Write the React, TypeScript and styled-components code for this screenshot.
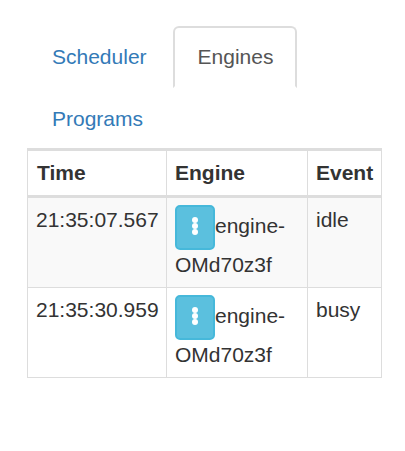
import React from "react";
import styled, { createGlobalStyle } from "styled-components";

const GlobalStyle = createGlobalStyle`
  *, *::before, *::after { box-sizing: border-box; }
  body {
    margin: 0;
    background: #fff;
    color: #333;
    font: 21px/30px "Liberation Sans", Arial, sans-serif;
  }
`;

const Page = styled.main`
  width: 355px;
  margin: 26px 0 0 27px;
`;

const Tabs = styled.nav`
  display: flex;
  flex-wrap: wrap;
  column-gap: 3px;
  margin-bottom: -1px;
`;

const Tab = styled.a<{ $active?: boolean }>`
  height: ${(p) => (p.$active ? 62 : 61)}px;
  padding: 14px ${(p) => (p.$active ? 22 : 21)}px 0 23px;
  border: 2px solid ${(p) => (p.$active ? "#ddd" : "transparent")};
  border-bottom-color: transparent;
  border-radius: 6px 6px 0 0;
  color: ${(p) => (p.$active ? "#555" : "#337ab7")};
  text-decoration: none;
`;

const LogTable = styled.table`
  width: 355px;
  table-layout: fixed;
  border-collapse: separate;
  border-spacing: 0;
  border-left: 1px solid #ddd;
  border-top: 3px solid #ddd;
`;

const Column = styled.col<{ $width: number }>`
  width: ${(p) => p.$width}px;
`;

const HeadCell = styled.th`
  height: 47px;
  padding: 7px 0 7px 8px;
  border-right: 1px solid #ddd;
  border-bottom: 3px solid #ddd;
  text-align: left;
  vertical-align: top;

  &:first-child { padding-left: 9px; }
`;

const Row = styled.tr`
  &:nth-child(odd) { background: #f9f9f9; }
`;

const Cell = styled.td`
  height: 90px;
  padding: 7px 0 0 8px;
  border-right: 1px solid #ddd;
  border-bottom: 1px solid #ddd;
  vertical-align: top;
`;

const EngineLine = styled.div`
  display: flex;
  height: 45px;
  line-height: 42px;
`;

const MenuButton = styled.button`
  display: flex;
  align-items: center;
  justify-content: center;
  width: 40px;
  height: 45px;
  padding: 0 0 3px;
  border: 2px solid #46b8da;
  border-radius: 5px;
  background: #5bc0de;
`;

const events = [
  { time: "21:35:07.567", event: "idle" },
  { time: "21:35:30.959", event: "busy" },
];

export default function App() {
  return (
    <>
      <GlobalStyle />
      <Page>
        <Tabs>
          <Tab>Scheduler</Tab>
          <Tab $active>Engines</Tab>
          <Tab>Programs</Tab>
        </Tabs>
        <LogTable>
          <colgroup>
            <Column $width={139} />
            <Column $width={141} />
            <Column $width={74} />
          </colgroup>
          <thead>
            <tr>
              <HeadCell>Time</HeadCell>
              <HeadCell>Engine</HeadCell>
              <HeadCell>Event</HeadCell>
            </tr>
          </thead>
          <tbody>
            {events.map((row) => (
              <Row key={row.time}>
                <Cell>{row.time}</Cell>
                <Cell>
                  <EngineLine>
                    <MenuButton aria-label="Engine actions">
                      <svg width="6" height="18" viewBox="0 0 6 18" fill="#fff">
                        <circle cx="3" cy="3" r="3" />
                        <circle cx="3" cy="9" r="3" />
                        <circle cx="3" cy="15" r="3" />
                      </svg>
                    </MenuButton>
                    engine-
                  </EngineLine>
                  OMd70z3f
                </Cell>
                <Cell>{row.event}</Cell>
              </Row>
            ))}
          </tbody>
        </LogTable>
      </Page>
    </>
  );
}
